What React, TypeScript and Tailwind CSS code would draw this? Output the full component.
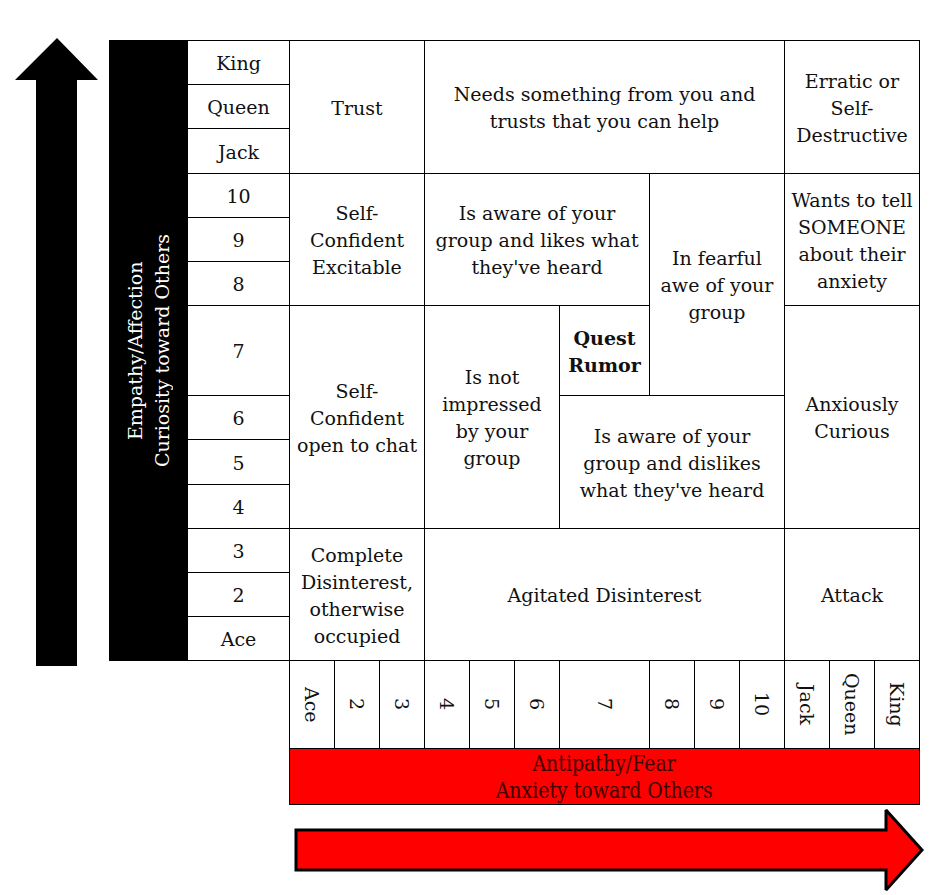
const rowLabels = [
  { label: 'King', cls: 'row-start-1' },
  { label: 'Queen', cls: 'row-start-2' },
  { label: 'Jack', cls: 'row-start-3' },
  { label: '10', cls: 'row-start-4' },
  { label: '9', cls: 'row-start-5' },
  { label: '8', cls: 'row-start-6' },
  { label: '7', cls: 'row-start-7' },
  { label: '6', cls: 'row-start-8' },
  { label: '5', cls: 'row-start-9' },
  { label: '4', cls: 'row-start-10' },
  { label: '3', cls: 'row-start-11' },
  { label: '2', cls: 'row-start-12' },
  { label: 'Ace', cls: 'row-start-13' },
]

const colLabels = [
  { label: 'Ace', cls: 'col-start-3 border-l -ml-px' },
  { label: '2', cls: 'col-start-4' },
  { label: '3', cls: 'col-start-5' },
  { label: '4', cls: 'col-start-6' },
  { label: '5', cls: 'col-start-7' },
  { label: '6', cls: 'col-start-8' },
  { label: '7', cls: 'col-start-9' },
  { label: '8', cls: 'col-start-10' },
  { label: '9', cls: 'col-start-11' },
  { label: '10', cls: 'col-start-12' },
  { label: 'Jack', cls: 'col-start-13' },
  { label: 'Queen', cls: 'col-start-14' },
  { label: 'King', cls: 'col-start-15' },
]

// reaction cells: columns = antipathy (Ace..King), rows = empathy (King..Ace)
const cells = [
  { lines: ['Trust'], cls: 'col-start-3 col-end-6 row-start-1 row-end-4 border-t' },
  { lines: ['Needs something from you and', 'trusts that you can help'], cls: 'col-start-6 col-end-13 row-start-1 row-end-4 border-t' },
  { lines: ['Erratic or', 'Self-', 'Destructive'], cls: 'col-start-13 col-end-16 row-start-1 row-end-4 border-t' },
  { lines: ['Self-', 'Confident', 'Excitable'], cls: 'col-start-3 col-end-6 row-start-4 row-end-7' },
  { lines: ['Is aware of your', 'group and likes what', "they've heard"], cls: 'col-start-6 col-end-10 row-start-4 row-end-7' },
  { lines: ['In fearful', 'awe of your', 'group'], cls: 'col-start-10 col-end-13 row-start-4 row-end-8' },
  { lines: ['Wants to tell', 'SOMEONE', 'about their', 'anxiety'], cls: 'col-start-13 col-end-16 row-start-4 row-end-7' },
  { lines: ['Self-', 'Confident', 'open to chat'], cls: 'col-start-3 col-end-6 row-start-7 row-end-11' },
  { lines: ['Is not', 'impressed', 'by your', 'group'], cls: 'col-start-6 col-end-9 row-start-7 row-end-11' },
  { lines: ['Quest', 'Rumor'], cls: 'col-start-9 col-end-10 row-start-7 row-end-8 font-bold' },
  { lines: ['Is aware of your', 'group and dislikes', "what they've heard"], cls: 'col-start-9 col-end-13 row-start-8 row-end-11' },
  { lines: ['Anxiously', 'Curious'], cls: 'col-start-13 col-end-16 row-start-7 row-end-11' },
  { lines: ['Complete', 'Disinterest,', 'otherwise', 'occupied'], cls: 'col-start-3 col-end-6 row-start-11 row-end-14' },
  { lines: ['Agitated Disinterest'], cls: 'col-start-6 col-end-13 row-start-11 row-end-14' },
  { lines: ['Attack'], cls: 'col-start-13 col-end-16 row-start-11 row-end-14' },
]

function UpArrow() {
  return (
    <svg width="109" height="630" viewBox="0 0 109 630" className="shrink-0">
      <polygon points="57,0 98,42 77,42 77,628 36,628 36,42 15,42" fill="#000" />
    </svg>
  )
}

function RightArrow() {
  return (
    <svg width="640" height="90" viewBox="0 0 640 90" className="ml-[293px]">
      <polygon
        points="3,25 593,25 593,5 629,45 593,85 593,65 3,65"
        fill="#ff0000"
        stroke="#000"
        strokeWidth="3"
        strokeMiterlimit="2"
      />
    </svg>
  )
}

export default function App() {
  return (
    <div className="w-[931px] h-[895px] bg-white overflow-hidden text-[#111] font-['DejaVu_Serif',serif] text-[19px]">
      <div className="flex pt-[38px]">
        <UpArrow />
        <div className="grid mt-[2px] grid-cols-[79px_102px_repeat(6,45px)_90px_repeat(6,45px)] grid-rows-[45px_44px_45px_44px_44px_44px_90px_44px_45px_44px_44px_44px_44px_88px_56px]">
          {/* vertical axis label */}
          <div className="col-start-1 row-start-1 row-end-14 bg-black flex items-center justify-center">
            <div className="[writing-mode:vertical-rl] rotate-180 text-white text-center leading-[27px] whitespace-nowrap">
              Empathy/Affection
              <br />
              Curiosity toward Others
            </div>
          </div>

          {rowLabels.map((r, i) => (
            <div
              key={r.label}
              className={`col-start-2 ${r.cls} flex items-center justify-center pt-[2px] border-r border-b border-black ${i === 0 ? 'border-t' : ''}`}
            >
              {r.label}
            </div>
          ))}

          {cells.map((c) => (
            <div
              key={c.lines.join(' ')}
              className={`${c.cls} flex items-center justify-center text-center leading-[27px] whitespace-nowrap border-r border-b border-black`}
            >
              <div className="pt-[2px]">
                {c.lines.map((l, i) => (
                  <div key={i}>{l}</div>
                ))}
              </div>
            </div>
          ))}

          {colLabels.map((c) => (
            <div
              key={c.label}
              className={`${c.cls} row-start-14 flex items-center justify-center border-r border-b border-black`}
            >
              <span className="[writing-mode:vertical-rl] whitespace-nowrap">{c.label}</span>
            </div>
          ))}

          {/* horizontal axis label */}
          <div className="col-start-3 col-end-16 row-start-15 -ml-px bg-[#ff0000] border-l border-r border-b border-black flex items-center justify-center">
            <div className="text-center leading-[27px] whitespace-nowrap scale-x-[0.86] text-[22px] text-[#400000]">
              <div>Antipathy/Fear</div>
              <div>Anxiety toward Others</div>
            </div>
          </div>
        </div>
      </div>
      <RightArrow />
    </div>
  )
}
